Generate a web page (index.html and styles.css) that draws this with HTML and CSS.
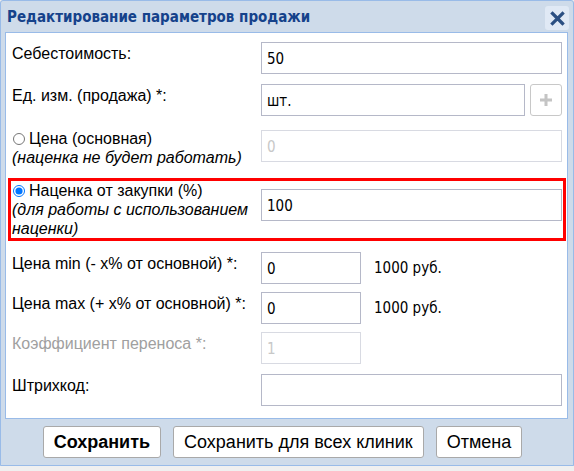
FILE: index.html
```html
<!DOCTYPE html>
<html lang="ru">
<head>
<meta charset="utf-8">
<title>Редактирование параметров продажи</title>
<link rel="stylesheet" href="styles.css">
</head>
<body>
<div class="window">
  <div class="titlebar">
    <span class="title">Редактирование параметров продажи</span>
    <span class="close"><svg width="15" height="15" viewBox="0 0 15 15"><path d="M2.5 2.5 L12.5 12.5 M12.5 2.5 L2.5 12.5" stroke="#2b4f82" stroke-width="3.2" stroke-linecap="square"/></svg></span>
  </div>
  <div class="panel">
    <div class="row r1">
      <label class="lbl">Себестоимость:</label>
      <div class="field"><input class="inp" type="text" value="50"></div>
    </div>
    <div class="row r2">
      <label class="lbl">Ед. изм. (продажа) *:</label>
      <div class="field">
        <input class="inp" type="text" value="шт.">
        <span class="plus"><svg width="14" height="14" viewBox="0 0 14 14"><path d="M7 1 V13 M1 7 H13" stroke="#c4c4c4" stroke-width="3"/></svg></span>
      </div>
    </div>
    <div class="row r3">
      <label class="lbl radio-lbl"><input type="radio" name="p" class="rb">Цена (основная)<br><i>(наценка не будет работать)</i></label>
      <div class="field"><input class="inp dis" type="text" value="0" disabled></div>
    </div>
    <div class="row hl">
      <label class="lbl radio-lbl"><input type="radio" name="p" class="rb" checked>Наценка от закупки (%)<br><i>(для работы с использованием наценки)</i></label>
      <div class="field"><input class="inp" type="text" value="100"></div>
    </div>
    <div class="row r5">
      <label class="lbl">Цена min (- x% от основной) *:</label>
      <div class="field"><input class="inp short" type="text" value="0"><span class="note">1000 руб.</span></div>
    </div>
    <div class="row r6">
      <label class="lbl">Цена max (+ x% от основной) *:</label>
      <div class="field"><input class="inp short" type="text" value="0"><span class="note">1000 руб.</span></div>
    </div>
    <div class="row r6">
      <label class="lbl off">Коэффициент переноса *:</label>
      <div class="field"><input class="inp short dis" type="text" value="1" disabled></div>
    </div>
    <div class="row r8">
      <label class="lbl">Штрихкод:</label>
      <div class="field"><input class="inp" type="text" value=""></div>
    </div>
  </div>
  <div class="buttons">
    <button class="btn bold">Сохранить</button>
    <button class="btn">Сохранить для всех клиник</button>
    <button class="btn">Отмена</button>
  </div>
</div>
</body>
</html>
```
FILE: styles.css
```css
html, body {
  margin: 0;
  padding: 0;
  background: #f0f0f0;
}
.window {
  width: 572px;
  height: 464px;
  background: #cedbea;
  border: 1px solid #99bbe8;
  border-radius: 3px 3px 0 0;
  font-family: "Liberation Sans", Arial, sans-serif;
  box-shadow: 0 1px 2px rgba(0,0,0,0.15);
}
.titlebar {
  height: 31px;
  display: flex;
  align-items: center;
  justify-content: space-between;
  padding: 0 4px 0 6px;
}
.title {
  font-family: "DejaVu Sans Condensed", "DejaVu Sans", sans-serif;
  font-weight: bold;
  font-size: 15px;
  color: #15428b;
  margin-top: 1px;
}
.close {
  width: 24px;
  height: 24px;
  background: #e0e9f5;
  border-radius: 3px;
  display: flex;
  align-items: center;
  justify-content: center;
  margin-top: 3px;
}
.panel {
  margin: 0 5px 0 4px;
  background: #fff;
  border: 1px solid #99bbe8;
  padding: 9px 5px 12px 6px;
}
.row {
  display: flex;
  align-items: flex-start;
}
.r2 { margin-top: 10px; }
.r3 { margin-top: 13px; }
.hl {
  margin: 11px -4px 0 -4px;
  border: 3px solid #ff0000;
  padding: 0 1px;
}
.r5 { margin-top: 11px; }
.r6 { margin-top: 8px; }
.r8 { margin-top: 10px; }
.lbl {
  width: 249px;
  flex: none;
  font-size: 16px;
  line-height: 20px;
  padding-top: 2px;
  color: #000;
}
.lbl.off { color: #a0a0a0; }
.radio-lbl {
  display: block;
  padding-top: 0;
  line-height: 19px;
}
.radio-lbl i { font-style: italic; }
.rb {
  margin: 0 4px 0 1px;
  width: 12px;
  height: 12px;
  vertical-align: -1px;
  accent-color: #0075ff;
}
.r3 .field { margin-top: 1px; }
.hl .field { margin-top: 8px; }
.field {
  flex: 1;
  display: flex;
  align-items: center;
  gap: 5px;
}
.inp {
  flex: 1;
  min-width: 0;
  box-sizing: border-box;
  height: 32px;
  border: 1px solid #b5b8c8;
  padding: 2px 5px 0 5px;
  font-family: "DejaVu Sans Condensed", "DejaVu Sans", sans-serif;
  font-size: 15px;
  color: #000;
  background: #fff;
  margin: 0;
  outline: none;
}
.inp.dis {
  border-color: #d8dae2;
  color: #c8c8c8;
}
.inp.short {
  flex: none;
  width: 100px;
}
.note {
  margin-left: 8px;
  font-family: "DejaVu Sans Condensed", "DejaVu Sans", sans-serif;
  font-size: 15px;
  color: #000;
}
.plus {
  width: 30px;
  height: 30px;
  flex: none;
  border: 1px solid #c8c8c8;
  border-radius: 3px;
  display: flex;
  align-items: center;
  justify-content: center;
  background: #fff;
}
.buttons {
  display: flex;
  justify-content: center;
  gap: 12px;
  margin-top: 7px;
  padding-right: 9px;
}
.btn {
  height: 32px;
  box-sizing: border-box;
  background: #fff;
  border: 1px solid #a9a9a9;
  border-radius: 3px;
  font-family: "Liberation Sans", Arial, sans-serif;
  font-size: 18px;
  color: #000;
  padding: 0 10px;
  margin: 0;
}
.btn.bold { font-weight: bold; }
```
